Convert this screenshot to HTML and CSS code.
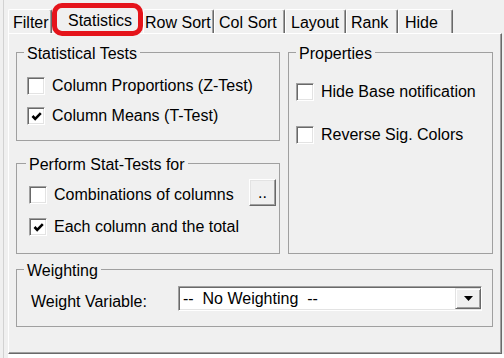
FILE: index.html
```html
<!DOCTYPE html>
<html>
<head>
    <title>Statistics</title>
    <link rel="stylesheet" href="styles.css">
</head>
<body>
    <section class="window">
        <div class="edge"></div>
        <div class="main">
            <div class="tabs">
                <div class="tab tab-filter">Filter</div>
                <div class="tab tab-active">Statistics</div>
                <div class="tab tab-rowsort">Row Sort</div>
                <div class="tab tab-colsort">Col Sort</div>
                <div class="tab tab-layout">Layout</div>
                <div class="tab tab-rank">Rank</div>
                <div class="tab tab-hide">Hide</div>
            </div>
            <div class="panel">
                <div class="groups">
                    <div class="col-left">
                        <fieldset class="group group-tests">
                            <legend>Statistical Tests</legend>
                            <div class="option"><span class="check"></span>Column Proportions (Z-Test)</div>
                            <div class="option"><span class="check checked"><svg width="11" height="9" viewBox="0 0 11 9"><path d="M1.5 4 L4.2 6.8 L9.8 1.2" fill="none" stroke="#000" stroke-width="2.6"/></svg></span>Column Means (T-Test)</div>
                        </fieldset>
                        <fieldset class="group group-perform">
                            <legend>Perform Stat-Tests for</legend>
                            <div class="option"><span class="check"></span>Combinations of columns<button class="more">..</button></div>
                            <div class="option"><span class="check checked"><svg width="11" height="9" viewBox="0 0 11 9"><path d="M1.5 4 L4.2 6.8 L9.8 1.2" fill="none" stroke="#000" stroke-width="2.6"/></svg></span>Each column and the total</div>
                        </fieldset>
                    </div>
                    <fieldset class="group group-props">
                        <legend>Properties</legend>
                        <div class="option"><span class="check"></span>Hide Base notification</div>
                        <div class="option"><span class="check"></span>Reverse Sig. Colors</div>
                    </fieldset>
                </div>
                <fieldset class="group group-weight">
                    <legend>Weighting</legend>
                    <div class="weight-row">
                        <span class="weight-label">Weight Variable:</span>
                        <div class="select">
                            <span class="select-text">--  No Weighting  --</span>
                            <span class="select-btn"><svg width="9" height="5" viewBox="0 0 9 5"><polygon points="0,0 9,0 4.5,5" fill="#000"/></svg></span>
                        </div>
                    </div>
                </fieldset>
            </div>
            <div class="below"></div>
        </div>
    </section>
</body>
</html>
```

FILE: styles.css
```css
:root {
    --color-face: #f0f0f0;
    --color-shadow: #a0a0a0;
    --color-dark: #696969;
    --color-light: #e3e3e3;
    --color-red: #e5141b;
}

html,
body {
    margin: 0;
    width: 504px;
    height: 358px;
    overflow: hidden;
}

body {
    font-family: "Liberation Sans", Arial, sans-serif;
    font-size: 16px;
    color: #000;
    background: var(--color-face);
}

.window {
    display: flex;
    height: 358px;
}

.edge {
    width: 3px;
    border-right: 1px solid #d2d2d2;
    margin-right: 4px;
    flex: none;
}

.main {
    flex: 1;
    display: flex;
    flex-direction: column;
}

/* tab strip */
.tabs {
    height: 33px;
    display: flex;
    align-items: flex-end;
    flex: none;
}

.tab {
    box-sizing: border-box;
    height: 24px;
    padding: 2px 0 0 4px;
    line-height: 21px;
    border-top: 1px solid #fff;
    border-left: 1px solid #fff;
    border-right: 1px solid var(--color-dark);
    box-shadow: inset -1px 0 var(--color-shadow);
    border-radius: 2px 2px 0 0;
    white-space: nowrap;
}

.tab-filter { width: 44px; }
.tab-rowsort { width: 71px; padding-left: 1px; }
.tab-colsort { width: 71px; }
.tab-layout { width: 61px; padding-left: 5px; }
.tab-rank { width: 52px; }
.tab-hide { width: 55px; padding-left: 6px; }

.tab-active {
    width: 91px;
    height: 33px;
    margin-bottom: -3px;
    padding: 3px 0 0 11px;
    line-height: 19px;
    border: 5px solid var(--color-red);
    border-radius: 10px;
    box-shadow: none;
    background: var(--color-face);
    position: relative;
    z-index: 1;
}

/* page */
.panel {
    box-sizing: border-box;
    width: 494px;
    height: 321px;
    flex: none;
    padding: 7px 0 0 7px;
    background: var(--color-face);
    border-top: 1px solid #fff;
    border-left: 1px solid #fff;
    border-right: 1px solid var(--color-dark);
    border-bottom: 1px solid var(--color-dark);
    box-shadow: inset -1px -1px var(--color-shadow);
}

.below {
    flex: 1;
    background: #fff;
}

.groups {
    display: grid;
    grid-template-columns: 264px 205px;
    column-gap: 8px;
    width: 477px;
}

.col-left {
    display: flex;
    flex-direction: column;
    gap: 11px;
}

.group {
    box-sizing: border-box;
    margin: 0;
    min-width: 0;
    padding: 0 3px 0 7px;
    border: 1px solid var(--color-shadow);
}

.group legend {
    padding: 4px 3px 0;
    line-height: 18px;
}

.group-tests {
    padding-top: 8px;
    padding-bottom: 9px;
}

.group-perform {
    padding-top: 6px;
    padding-bottom: 11px;
}

.group-perform legend {
    margin-left: 2px;
}

.group-perform .option + .option {
    margin-top: 2px;
}

.group-props {
    padding-top: 14px;
}

.group-props .option {
    padding-left: 0;
}

.group-props .option + .option {
    margin-top: 13px;
}

.option {
    display: flex;
    align-items: center;
    height: 30px;
    padding-left: 3px;
    white-space: nowrap;
}

.group-perform .option {
    padding-left: 5px;
}

.check {
    box-sizing: border-box;
    width: 18px;
    height: 18px;
    margin-right: 7px;
    flex: none;
    display: flex;
    align-items: center;
    justify-content: center;
    background: #fff;
    border: 1px solid;
    border-color: var(--color-shadow) #fff #fff var(--color-shadow);
    box-shadow: inset 1px 1px var(--color-dark), inset -1px -1px var(--color-light);
}

.more {
    box-sizing: border-box;
    width: 27px;
    height: 27px;
    margin: 0 0 6px auto;
    padding: 0;
    font-family: "Liberation Sans", Arial, sans-serif;
    font-size: 16px;
    line-height: 25px;
    color: #000;
    background: var(--color-face);
    border: 1px solid;
    border-color: #fff var(--color-dark) var(--color-dark) #fff;
    box-shadow: inset -1px -1px var(--color-shadow), inset 1px 1px var(--color-light);
}

.group-weight {
    width: 477px;
    margin-top: 4px;
    padding: 6px 10px 15px 7px;
}

.weight-row {
    display: flex;
    align-items: flex-end;
}

.weight-label {
    box-sizing: border-box;
    width: 154px;
    padding-left: 7px;
    line-height: 19px;
    flex: none;
}

.select {
    box-sizing: border-box;
    width: 304px;
    height: 25px;
    display: flex;
    align-items: center;
    padding-left: 4px;
    background: #fff;
    border: 1px solid;
    border-color: var(--color-shadow) #fff #fff var(--color-shadow);
    box-shadow: inset 1px 1px var(--color-dark), inset -1px -1px var(--color-light);
}

.select-text {
    white-space: pre;
}

.select-btn {
    box-sizing: border-box;
    width: 26px;
    height: 21px;
    margin-left: auto;
    display: flex;
    align-items: center;
    justify-content: center;
    background: var(--color-face);
    border: 1px solid;
    border-color: var(--color-light) var(--color-dark) var(--color-dark) var(--color-light);
    box-shadow: inset 1px 1px #fff, inset -1px -1px var(--color-shadow);
}
```
